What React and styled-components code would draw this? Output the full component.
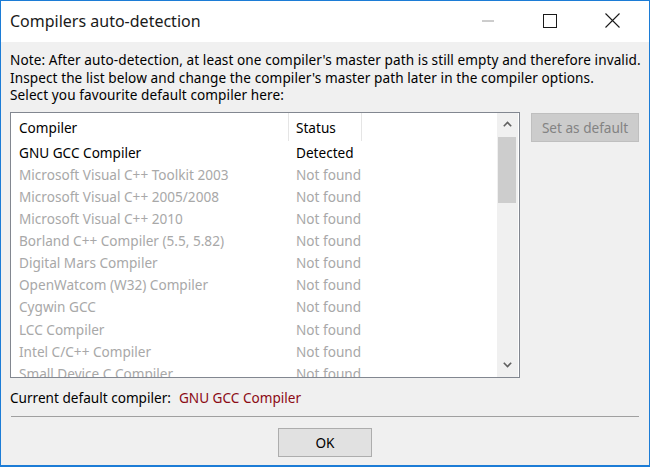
import React from "react";
import styled, { createGlobalStyle } from "styled-components";

const GlobalStyle = createGlobalStyle`
  html, body {
    margin: 0;
    padding: 0;
    background: #ffffff;
  }
  body {
    font-family: "Noto Sans", "Open Sans", sans-serif;
    font-size: 13.6px;
  }
`;

const compilers = [
  { name: "GNU GCC Compiler", status: "Detected", found: true },
  { name: "Microsoft Visual C++ Toolkit 2003", status: "Not found" },
  { name: "Microsoft Visual C++ 2005/2008", status: "Not found" },
  { name: "Microsoft Visual C++ 2010", status: "Not found" },
  { name: "Borland C++ Compiler (5.5, 5.82)", status: "Not found" },
  { name: "Digital Mars Compiler", status: "Not found" },
  { name: "OpenWatcom (W32) Compiler", status: "Not found" },
  { name: "Cygwin GCC", status: "Not found" },
  { name: "LCC Compiler", status: "Not found" },
  { name: "Intel C/C++ Compiler", status: "Not found" },
  { name: "Small Device C Compiler", status: "Not found" },
  { name: "Tiny C Compiler", status: "Not found" },
];

const App = () => {
  return (
    <>
      <GlobalStyle />
      <Window>
        <TitleBar>
          <Title>Compilers auto-detection</Title>
          <Controls>
            <CaptionButton>
              <svg width="12" height="2" viewBox="0 0 12 2">
                <line x1="0" y1="1" x2="12" y2="1" stroke="#9a9a9a" strokeWidth="1" />
              </svg>
            </CaptionButton>
            <CaptionButton>
              <svg width="14" height="14" viewBox="0 0 14 14">
                <rect x="0.5" y="0.5" width="13" height="13" fill="none" stroke="#1a1a1a" strokeWidth="1" />
              </svg>
            </CaptionButton>
            <CaptionButton>
              <svg width="15" height="15" viewBox="0 0 15 15">
                <path d="M0.5 0.5 L14.5 14.5 M14.5 0.5 L0.5 14.5" stroke="#1a1a1a" strokeWidth="1.1" />
              </svg>
            </CaptionButton>
          </Controls>
        </TitleBar>
        <Body>
          <Note>
            Note: After auto-detection, at least one compiler's master path is
            still empty and therefore invalid.
            <br />
            Inspect the list below and change the compiler's master path later
            in the compiler options.
            <br />
            Select you favourite default compiler here:
          </Note>
          <MainRow>
            <ListBox>
              <ListArea>
                <HeaderRow>
                  <HeaderCell width={278}>Compiler</HeaderCell>
                  <HeaderCell width={73}>Status</HeaderCell>
                </HeaderRow>
                {compilers.map((c) => (
                  <Row key={c.name} found={c.found}>
                    <Cell width={278}>{c.name}</Cell>
                    <Cell width={73}>{c.status}</Cell>
                  </Row>
                ))}
              </ListArea>
              <ScrollBar>
                <ArrowBox>
                  <svg width="9" height="6" viewBox="0 0 9 6">
                    <path d="M0.8 5.2 L4.5 1.5 L8.2 5.2" fill="none" stroke="#606060" strokeWidth="1.6" />
                  </svg>
                </ArrowBox>
                <Thumb />
                <Track />
                <ArrowBox>
                  <svg width="9" height="6" viewBox="0 0 9 6">
                    <path d="M0.8 0.8 L4.5 4.5 L8.2 0.8" fill="none" stroke="#606060" strokeWidth="1.6" />
                  </svg>
                </ArrowBox>
              </ScrollBar>
            </ListBox>
            <SideButton disabled>Set as default</SideButton>
          </MainRow>
          <CurrentRow>
            <span>Current default compiler:</span>
            <Current>GNU GCC Compiler</Current>
          </CurrentRow>
          <Separator />
          <ButtonRow>
            <OkButton>OK</OkButton>
          </ButtonRow>
        </Body>
      </Window>
    </>
  );
};

export default App;

const Window = styled.div`
  box-sizing: border-box;
  width: 650px;
  height: 467px;
  border: 1px solid #1c7cd6;
  border-bottom-width: 2px;
  display: flex;
  flex-direction: column;
  background: #f0f0f0;
  overflow: hidden;
`;

const TitleBar = styled.div`
  height: 41px;
  background: #ffffff;
  display: flex;
  align-items: center;
  padding-left: 9px;
  flex-shrink: 0;
`;

const Title = styled.div`
  flex: 1;
  font-size: 16px;
  color: #1a1a1a;
  padding-bottom: 1px;
`;

const Controls = styled.div`
  display: flex;
  height: 100%;
  margin-right: 6px;
`;

const CaptionButton = styled.div`
  width: 62px;
  height: 100%;
  display: flex;
  align-items: center;
  justify-content: center;
  padding-bottom: 2px;
  box-sizing: border-box;
`;

const Body = styled.div`
  flex: 1;
  display: flex;
  flex-direction: column;
  padding: 9px 10px 0 9px;
`;

const Note = styled.div`
  line-height: 17.6px;
  color: #000;
  white-space: nowrap;
  letter-spacing: 0.08px;
`;

const MainRow = styled.div`
  display: flex;
  align-items: flex-start;
  gap: 11px;
  margin-top: 8px;
`;

const ListBox = styled.div`
  box-sizing: border-box;
  width: 511px;
  height: 266px;
  border: 1px solid #828790;
  background: #ffffff;
  display: flex;
  overflow: hidden;
`;

const ListArea = styled.div`
  flex: 1;
  overflow: hidden;
`;

const HeaderRow = styled.div`
  display: flex;
  height: 28px;
  align-items: center;
  color: #000;
`;

const HeaderCell = styled.div`
  width: ${(p) => p.width}px;
  height: 100%;
  display: flex;
  align-items: center;
  box-sizing: border-box;
  padding: 1px 0 0 8px;
  border-right: 1px solid #e5e5e5;
  & + & {
    padding-left: 7px;
  }
`;

const Row = styled.div`
  display: flex;
  height: 22.1px;
  align-items: center;
  color: ${(p) => (p.found ? "#000000" : "#a8a8a8")};
`;

const Cell = styled.div`
  width: ${(p) => p.width}px;
  white-space: nowrap;
  box-sizing: border-box;
  padding: 1px 0 0 8px;
  & + & {
    padding-left: 7px;
  }
`;

const ScrollBar = styled.div`
  width: 21px;
  background: #f0f0f0;
  display: flex;
  flex-direction: column;
  margin-right: 1px;
`;

const ArrowBox = styled.div`
  height: 23px;
  display: flex;
  align-items: center;
  justify-content: center;
`;

const Thumb = styled.div`
  height: 66px;
  margin: 1px 2px 0 1px;
  background: #cdcdcd;
`;

const Track = styled.div`
  flex: 1;
`;

const SideButton = styled.button`
  width: 108px;
  height: 29px;
  margin-top: 1px;
  border: 1px solid #bfbfbf;
  background: #cccccc;
  color: #838383;
  font-family: "Noto Sans", "Open Sans", sans-serif;
  font-size: 13.6px;
  padding: 0;
`;

const CurrentRow = styled.div`
  display: flex;
  align-items: center;
  height: 20px;
  margin-top: 10px;
  gap: 8px;
  color: #000;
`;

const Current = styled.span`
  color: #8b0a14;
`;

const Separator = styled.div`
  height: 1px;
  background: #a0a0a0;
  margin: 8px 0 0 1px;
`;

const ButtonRow = styled.div`
  display: flex;
  justify-content: center;
  margin-top: 11px;
  padding-left: 1px;
`;

const OkButton = styled.button`
  width: 94px;
  height: 29px;
  border: 1px solid #adadad;
  background: #e1e1e1;
  color: #000;
  font-family: "Noto Sans", "Open Sans", sans-serif;
  font-size: 13.6px;
  padding: 0;
`;
